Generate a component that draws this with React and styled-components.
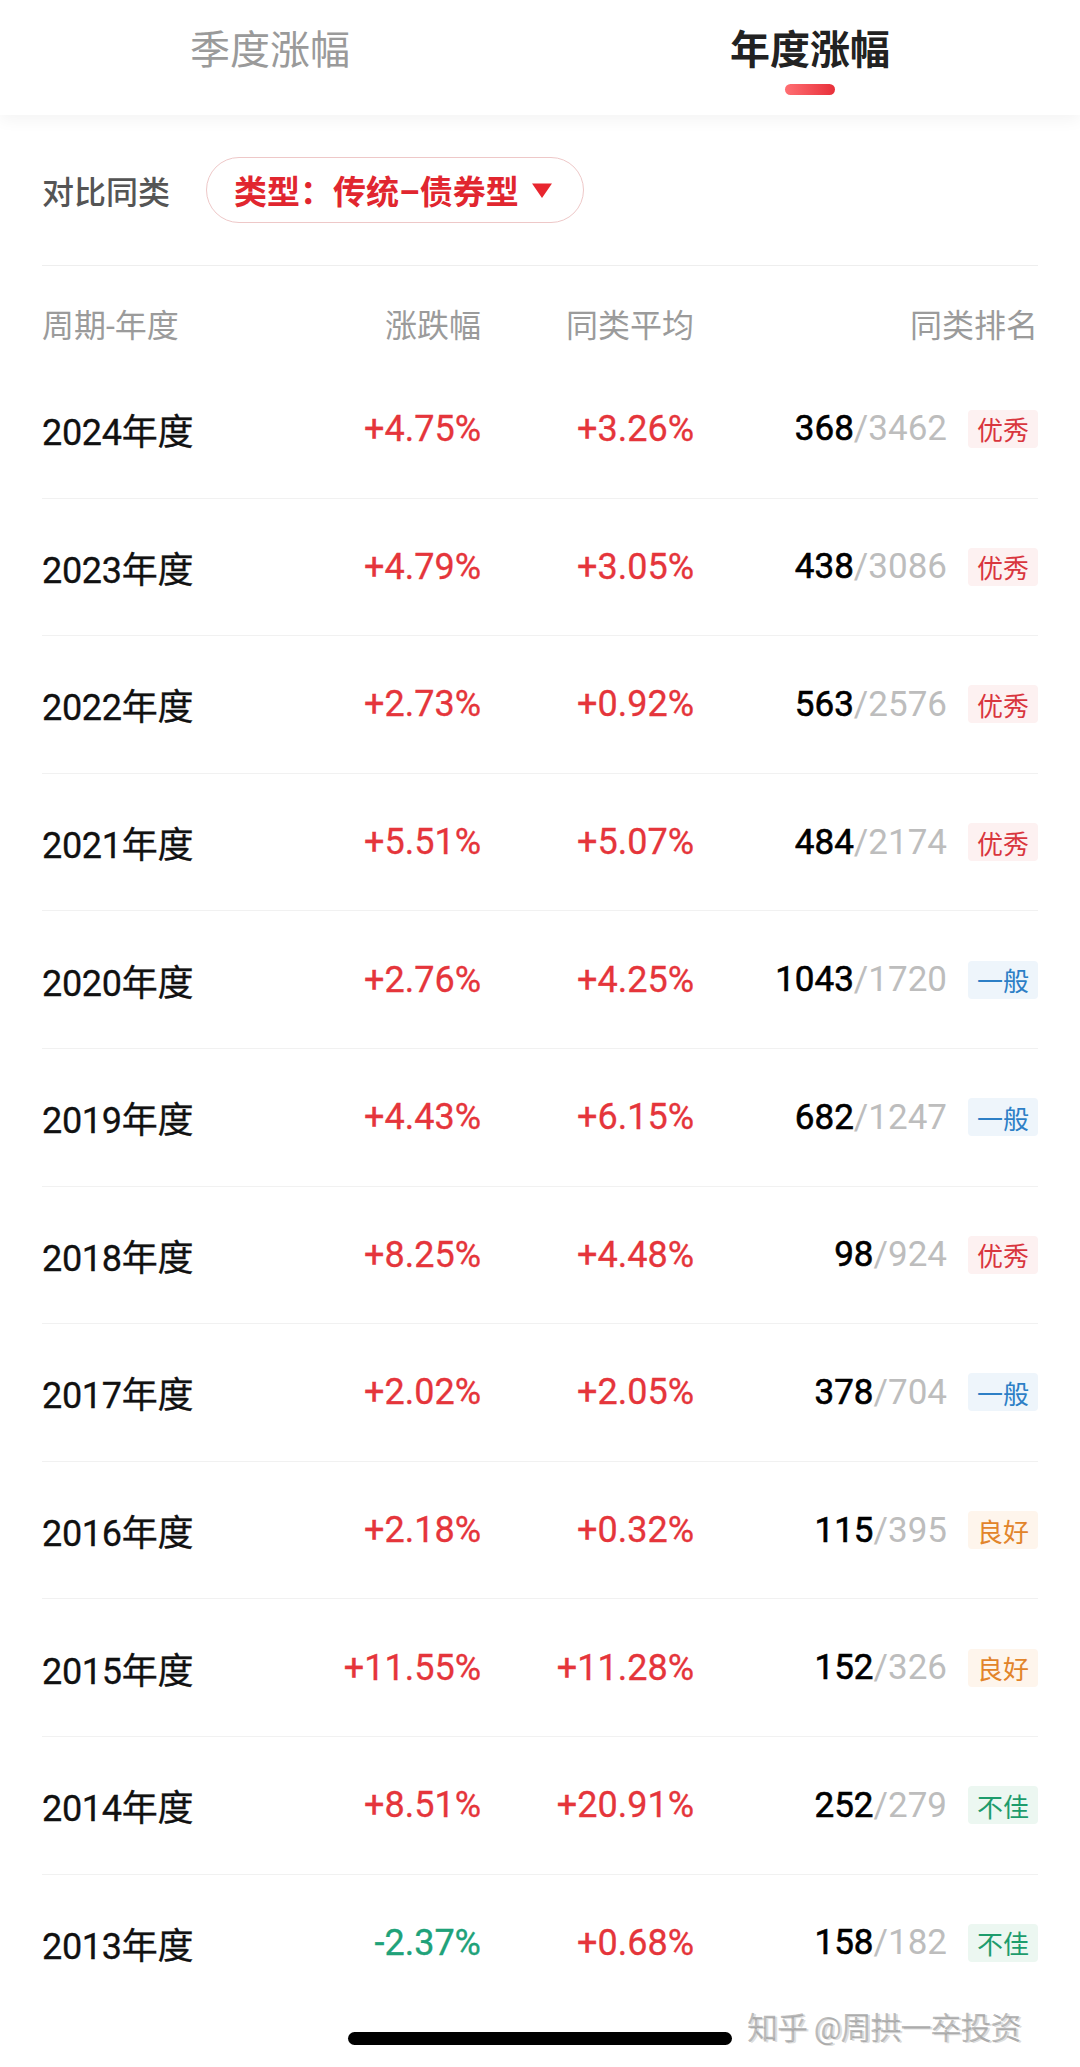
import React, { useState } from "react";
import styled, { createGlobalStyle } from "styled-components";

const rows = [
  { year: "2024", change: "+4.75%", avg: "+3.26%", rank: 368, total: 3462, level: "优秀" },
  { year: "2023", change: "+4.79%", avg: "+3.05%", rank: 438, total: 3086, level: "优秀" },
  { year: "2022", change: "+2.73%", avg: "+0.92%", rank: 563, total: 2576, level: "优秀" },
  { year: "2021", change: "+5.51%", avg: "+5.07%", rank: 484, total: 2174, level: "优秀" },
  { year: "2020", change: "+2.76%", avg: "+4.25%", rank: 1043, total: 1720, level: "一般" },
  { year: "2019", change: "+4.43%", avg: "+6.15%", rank: 682, total: 1247, level: "一般" },
  { year: "2018", change: "+8.25%", avg: "+4.48%", rank: 98, total: 924, level: "优秀" },
  { year: "2017", change: "+2.02%", avg: "+2.05%", rank: 378, total: 704, level: "一般" },
  { year: "2016", change: "+2.18%", avg: "+0.32%", rank: 115, total: 395, level: "良好" },
  { year: "2015", change: "+11.55%", avg: "+11.28%", rank: 152, total: 326, level: "良好" },
  { year: "2014", change: "+8.51%", avg: "+20.91%", rank: 252, total: 279, level: "不佳" },
  { year: "2013", change: "-2.37%", avg: "+0.68%", rank: 158, total: 182, level: "不佳" },
];

// badge colours per level
const levels = {
  优秀: { fg: "#d9363e", bg: "#fdf1f1" },
  一般: { fg: "#2d7fc6", bg: "#eef5fb" },
  良好: { fg: "#e2842a", bg: "#fef5ec" },
  不佳: { fg: "#1e9c6c", bg: "#ecf7f1" },
};

function App() {
  const [tab, setTab] = useState(1);

  return (
    <>
      <GlobalStyle />
      <Page>
        <TabBar>
          {["季度涨幅", "年度涨幅"].map((label, i) => (
            <Tab key={label} onClick={() => setTab(i)}>
              <TabLabel $active={tab === i}>{label}</TabLabel>
              <TabLine $active={tab === i} />
            </Tab>
          ))}
        </TabBar>

        <FilterRow>
          <FilterTitle>对比同类</FilterTitle>
          <FilterPill>
            类型：传统–债券型
            <svg width="22" height="17" viewBox="0 0 22 17">
              <path d="M1 1.5h20L11 16z" fill="#e8262f" />
            </svg>
          </FilterPill>
        </FilterRow>

        <Table>
          <HeadRow>
            <HeadCell>周期-年度</HeadCell>
            <HeadCell $right>涨跌幅</HeadCell>
            <HeadCell $right>同类平均</HeadCell>
            <HeadCell $right>同类排名</HeadCell>
          </HeadRow>
          {rows.map((r, i) => (
            <Row key={r.year} $first={i === 0}>
              <Period>{r.year}年度</Period>
              <Pct $down={r.change.startsWith("-")}>{r.change}</Pct>
              <Pct $down={r.avg.startsWith("-")}>{r.avg}</Pct>
              <RankCell>
                <RankNum>
                  {r.rank}
                  <RankTotal>/{r.total}</RankTotal>
                </RankNum>
                <Badge $fg={levels[r.level].fg} $bg={levels[r.level].bg}>
                  {r.level}
                </Badge>
              </RankCell>
            </Row>
          ))}
        </Table>

        <Watermark>知乎 @周拱一卒投资</Watermark>
        <HomeBar />
      </Page>
    </>
  );
}

export default App;

const GlobalStyle = createGlobalStyle`
  * {
    box-sizing: border-box;
  }
  body {
    margin: 0;
    background: #fff;
    font-family: Roboto, "Noto Sans CJK SC", sans-serif;
  }
`;

const Page = styled.div`
  position: relative;
  width: 1080px;
  min-height: 2067px;
  background: #fff;
  overflow: hidden;
`;

const TabBar = styled.div`
  display: grid;
  grid-template-columns: 1fr 1fr;
  height: 115px;
  background: #fff;
  box-shadow: 0 6px 14px rgba(0, 0, 0, 0.045);
  position: relative;
  z-index: 1;
`;

const Tab = styled.div`
  display: flex;
  flex-direction: column;
  align-items: center;
  padding-top: 30px;
  gap: 12px;
  cursor: pointer;
`;

const TabLabel = styled.span`
  font-size: 40px;
  line-height: 42px;
  color: ${(p) => (p.$active ? "#222" : "#9a9a9a")};
  font-weight: ${(p) => (p.$active ? 700 : 400)};
`;

const TabLine = styled.span`
  width: 50px;
  height: 11px;
  border-radius: 6px;
  background: ${(p) =>
    p.$active ? "linear-gradient(90deg, #ff6f73, #e8303a)" : "transparent"};
`;

const FilterRow = styled.div`
  display: flex;
  align-items: center;
  gap: 36px;
  height: 151px;
  margin: 0 42px;
  border-bottom: 1.5px solid #eeeeee;
`;

const FilterTitle = styled.span`
  font-size: 32px;
  font-weight: 500;
  color: #555;
`;

const FilterPill = styled.div`
  display: flex;
  align-items: center;
  gap: 12px;
  height: 66px;
  padding: 0 30px 0 27px;
  border: 1.5px solid #eec8c8;
  border-radius: 33px;
  font-size: 33px;
  font-weight: 700;
  color: #e1262f;
`;

const Table = styled.div`
  margin: 0 42px;
`;

const grid = `
  display: grid;
  grid-template-columns: 240px 199px 213px 1fr;
  align-items: center;
`;

const HeadRow = styled.div`
  ${grid}
  height: 94px;
  padding-top: 20px;
`;

const HeadCell = styled.span`
  font-size: 32px;
  color: #9b9b9b;
  text-align: ${(p) => (p.$right ? "right" : "left")};
`;

const Row = styled.div`
  ${grid}
  height: 137.6px;
  border-top: ${(p) => (p.$first ? "none" : "1.5px solid #f1f1f1")};
`;

const Period = styled.span`
  font-size: 36px;
  color: #111;
  letter-spacing: -0.3px;
  -webkit-text-stroke: 0.3px #111;
`;

const Pct = styled.span`
  font-size: 36px;
  text-align: right;
  color: ${(p) => (p.$down ? "#20a279" : "#e5353b")};
  -webkit-text-stroke: 0.3px currentColor;
`;

const RankCell = styled.div`
  display: flex;
  justify-content: flex-end;
  align-items: center;
  gap: 21px;
`;

const RankNum = styled.span`
  font-size: 35px;
  color: #000;
  -webkit-text-stroke: 0.6px #000;
`;

const RankTotal = styled.span`
  color: #bdbdbd;
  -webkit-text-stroke: 0;
`;

const Badge = styled.span`
  display: inline-flex;
  align-items: center;
  height: 38px;
  padding: 0 9px;
  border-radius: 4px;
  font-size: 26px;
  color: ${(p) => p.$fg};
  background: ${(p) => p.$bg};
`;

const Watermark = styled.div`
  position: absolute;
  left: 747px;
  top: 2003px;
  font-size: 31px;
  letter-spacing: -1px;
  color: rgba(120, 120, 120, 0.5);
  text-shadow: 2px 1px 0 rgba(160, 160, 160, 0.35);
  white-space: nowrap;
`;

const HomeBar = styled.div`
  position: absolute;
  left: 348px;
  top: 2032px;
  width: 384px;
  height: 13px;
  border-radius: 7px;
  background: #000;
`;
